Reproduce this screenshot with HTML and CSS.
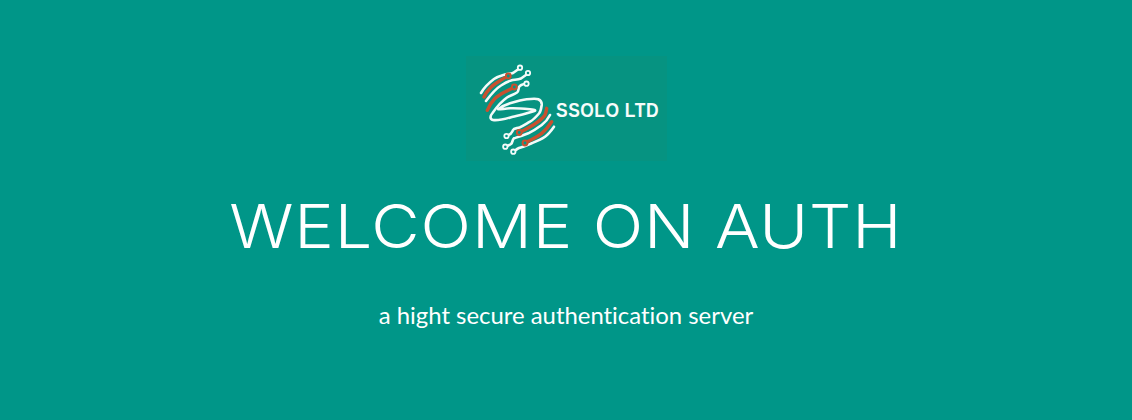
FILE: index.html
```html
<!DOCTYPE html>
<html lang="en">
<head>
<meta charset="utf-8">
<title>Welcome on Auth</title>
<link rel="stylesheet" href="styles.css">
</head>
<body>
<main class="hero">
  <div class="logo">
    <svg class="logo-mark" viewBox="0 0 90 105" width="90" height="105" fill="none">
      <g stroke="#f4fbf9" stroke-width="2.600" stroke-linecap="round" stroke-linejoin="round">
        <path d="M54 12L47 17C44 18 41 17.500 38 18.800C34 20 31 21 28 23C24 26 19 30 15 37"/>
        <path d="M62 17.500L55 22.500C51 24 48 23.500 45 24.500C41 25.500 38 27.500 35 29.500C31 32 26 37 20 45"/>
        <path d="M60.300 27.700C57 28 54 29 53 31C52 34 53 35 51 36.500C47 39 44 39.500 41 41.500C36 45 30 52 26.500 57C24 60 23.500 63 27 64C33 65 42 62 47 60.700C54 59 63 57 69 54.700C70 54 66 53.500 64 53.300C57 52.600 50 52 44 52.300C39 52.600 34 53.500 32.300 53.300C35 51 40 48.500 44 47.300C50 45.500 56 43.800 60.700 43.300C65 42.800 70 42.300 72.300 43.300C75 44.500 76 46 75.700 49C75.300 52 75 55 73 57.500C70 61 67 64 64 65.700C60 68 57 70 54 71.300C51 72.500 48 72 47 74C46 76 46 78 40.700 80"/>
        <path d="M84 59C82 63 79 66.500 75.700 69C71 72.500 67 75 62.300 77.300C57 79.500 52 81 48 82.300C46 84 47 86 45 88C43 89.500 41 90 39.500 90.700"/>
        <path d="M88 70.700C85 75 82 78.500 79 80.700C75 83.500 70 85.500 65.700 87.300C62 89 60 90 57.300 90.700C55 91.500 53 92 52 92.500C50 93.500 49 95 47.500 95.700"/>
      </g>
      <g stroke="#c9502f" stroke-width="3.400" stroke-linecap="round" stroke-linejoin="round">
        <path d="M42 20.300C38 22 35 24 32 26C28 28.500 25 31 23.500 33C21 35.500 19 38.500 18 41"/>
        <path d="M48.700 31C45 33 42 34.500 38.700 36C35 38 31 40.500 28.700 42.700C25.500 46 23 50 21.300 54.300"/>
        <path d="M80.700 52.300C80.300 54.500 80 57 79 59C76 63.500 71 66.500 67.300 69C63 71.500 58 74.500 53 76.700"/>
        <path d="M85.700 65.700C83 70 80 74 75.700 77.300C71 81 65 84 59 86.700"/>
      </g>
      <g fill="#009688" stroke="#f4fbf9" stroke-width="1.800">
        <circle cx="54" cy="11.700" r="2.200"/>
        <circle cx="62" cy="17" r="2.200"/>
        <circle cx="60.500" cy="27.700" r="2.200"/>
        <circle cx="40.500" cy="80" r="2.200"/>
        <circle cx="39.300" cy="90.700" r="2.200"/>
        <circle cx="47.300" cy="95.700" r="2.200"/>
      </g>
      <g fill="#009688" stroke="#c9502f" stroke-width="2">
        <circle cx="42.300" cy="20" r="2.400"/>
        <circle cx="48.300" cy="31" r="2.400"/>
        <circle cx="53.300" cy="76.500" r="2.400"/>
        <circle cx="59" cy="87" r="2.400"/>
      </g>
    </svg>
    <span class="logo-text">SSOLO LTD</span>
  </div>
  <h1 class="title">WELCOME ON AUTH</h1>
  <p class="subtitle">a hight secure authentication server</p>
</main>
</body>
</html>
```
FILE: styles.css
```css
html, body {
  margin: 0;
  height: 100%;
}
body {
  background: #009688;
  color: #fff;
  overflow: hidden;
}
.hero {
  display: flex;
  flex-direction: column;
  align-items: center;
  padding-top: 56px;
}
.logo {
  width: 201px;
  height: 105px;
  background: #069381;
  display: flex;
  align-items: center;
}
.logo-mark {
  flex: none;
}
.logo-text {
  font-family: "Liberation Sans", sans-serif;
  font-weight: 700;
  font-size: 20px;
  letter-spacing: 0.600px;
  color: #f7fcfb;
  margin-top: 4px;
  white-space: nowrap;
  transform: scaleX(0.87);
  transform-origin: left center;
}
.title {
  margin: 30px 0 0;
  font-family: Inter, sans-serif;
  font-weight: 300;
  font-size: 61px;
  letter-spacing: 0.800px;
  line-height: 70px;
  white-space: nowrap;
  transform: scaleX(1.09);
}
.subtitle {
  margin: 41px 0 0;
  font-family: Lato, sans-serif;
  font-size: 23.900px;
  font-variant-ligatures: none;
  line-height: 26px;
}
```
